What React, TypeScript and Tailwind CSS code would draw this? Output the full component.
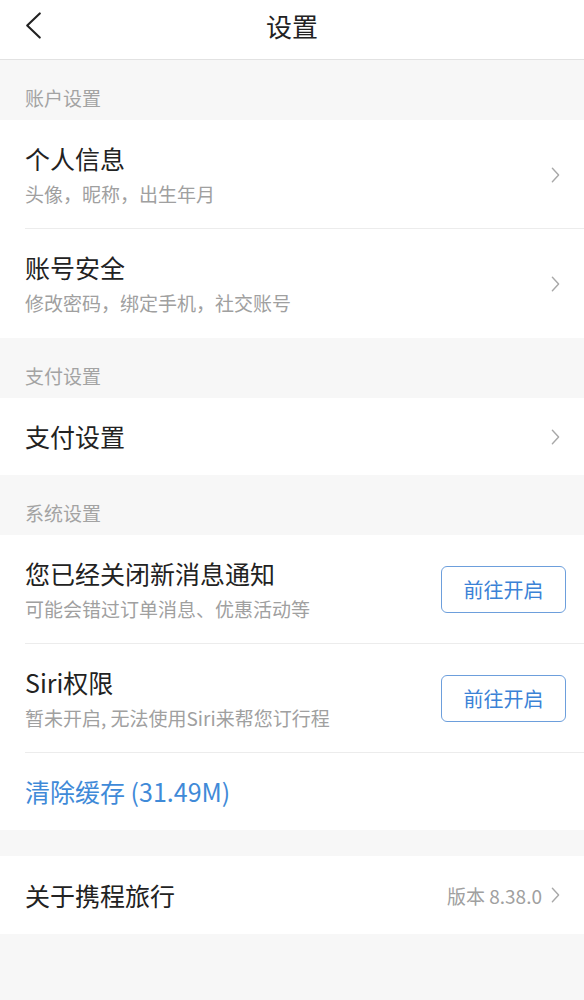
import React from 'react';

const font = { fontFamily: '"Noto Sans CJK SC", "Noto Sans", sans-serif' };

function Chevron({ className = '' }: { className?: string }) {
  return (
    <svg viewBox="0 0 10 18" className={className} fill="none" stroke="currentColor" strokeWidth="1.6" strokeLinecap="round" strokeLinejoin="round">
      <path d="M1.5 1.5 L8.5 9 L1.5 16.5" />
    </svg>
  );
}

function SectionHeader({ title }: { title: string }) {
  return (
    <div className="h-[60px] flex items-end pb-[13px] px-[25px] text-[19px] leading-none text-[#a3a3a3]">
      {title}
    </div>
  );
}

function NavRow({ title, sub, divider }: { title: string; sub: string; divider?: boolean }) {
  return (
    <div className="relative h-[109px] flex items-center pl-[25px] pr-[24px]">
      <div className="flex-1">
        <div className="text-[25px] leading-none text-[#222]">{title}</div>
        <div className="mt-[13px] text-[19px] leading-none text-[#a0a0a0]">{sub}</div>
      </div>
      <Chevron className="w-[9px] h-[16px] text-[#a8a8a8]" />
      {divider && <div className="absolute bottom-0 left-[25px] right-0 h-px bg-[#ececec]" />}
    </div>
  );
}

function ActionRow({ title, sub, divider }: { title: string; sub: string; divider?: boolean }) {
  return (
    <div className="relative h-[109px] flex items-center pl-[25px] pr-[18px]">
      <div className="flex-1">
        <div className="text-[25px] leading-none text-[#222]">{title}</div>
        <div className="mt-[13px] text-[19px] leading-none text-[#a0a0a0]">{sub}</div>
      </div>
      <button className="w-[125px] h-[47px] rounded-[6px] border border-[#6d9fdc] text-[20px] text-[#3b82d6] bg-white">
        前往开启
      </button>
      {divider && <div className="absolute bottom-0 left-[25px] right-0 h-px bg-[#ececec]" />}
    </div>
  );
}

export default function App() {
  return (
    <div className="w-[584px] h-[1000px] bg-[#f7f7f7] overflow-hidden" style={font}>
      <div className="relative h-[60px] bg-white border-b border-[#e2e2e2] flex items-center justify-center">
        <svg viewBox="0 0 18 28" className="absolute left-[24px] top-[12px] w-[18px] h-[27px] text-[#222]" fill="none" stroke="currentColor" strokeWidth="2.2" strokeLinecap="round" strokeLinejoin="round">
          <path d="M16 1.5 L3 14 L16 26.5" />
        </svg>
        <div className="text-[26px] leading-none text-[#222] -mt-[7px]">设置</div>
      </div>

      <SectionHeader title="账户设置" />
      <div className="bg-white">
        <NavRow title="个人信息" sub="头像，昵称，出生年月" divider />
        <NavRow title="账号安全" sub="修改密码，绑定手机，社交账号" />
      </div>

      <SectionHeader title="支付设置" />
      <div className="bg-white h-[77px] flex items-center pl-[25px] pr-[24px]">
        <div className="flex-1 text-[25px] leading-none text-[#222]">支付设置</div>
        <Chevron className="w-[9px] h-[16px] text-[#a8a8a8]" />
      </div>

      <SectionHeader title="系统设置" />
      <div className="bg-white">
        <ActionRow title="您已经关闭新消息通知" sub="可能会错过订单消息、优惠活动等" divider />
        <ActionRow title="Siri权限" sub="暂未开启, 无法使用Siri来帮您订行程" divider />
        <div className="h-[77px] flex items-center pl-[25px] text-[25px] leading-none text-[#3f8ad8]">
          清除缓存 (31.49M)
        </div>
      </div>

      <div className="h-[26px]" />
      <div className="bg-white h-[78px] flex items-center pl-[25px] pr-[24px]">
        <div className="flex-1 text-[25px] leading-none text-[#222]">关于携程旅行</div>
        <span className="text-[19px] leading-none text-[#a0a0a0] mr-[9px]">版本 8.38.0</span>
        <Chevron className="w-[9px] h-[16px] text-[#a8a8a8]" />
      </div>
    </div>
  );
}
